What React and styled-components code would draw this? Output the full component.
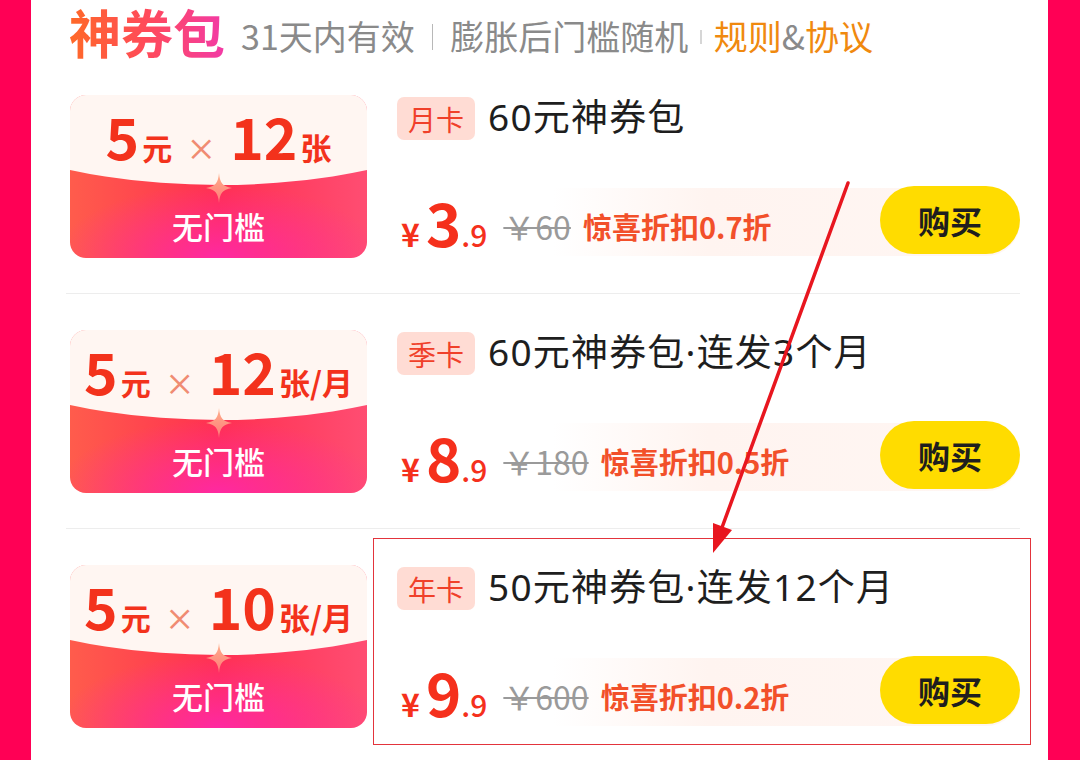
import React from 'react';
import styled, { createGlobalStyle } from 'styled-components';

const GlobalStyle = createGlobalStyle`
  html, body {
    margin: 0;
    padding: 0;
    background: #ff0055;
  }
  body {
    font-family: "Noto Sans CJK SC", "Noto Sans", sans-serif;
  }
`;

const Frame = styled.div`
  position: relative;
  width: 1080px;
  height: 760px;
  overflow: hidden;
  background: #ff0055;
  padding: 0 32px 0 31px;
  box-sizing: border-box;
`;

const Sheet = styled.div`
  height: 100%;
  background: #fff;
  padding: 0 28px 0 35px;
  box-sizing: border-box;
`;

const Header = styled.div`
  display: flex;
  align-items: center;
  height: 59px;
  padding-left: 1px;
`;

const Title = styled.span`
  font-size: 52px;
  font-weight: 700;
  line-height: 56px;
  margin-top: 4px;
  padding: 0 2px;
  background: linear-gradient(90deg, #ff6a26 0%, #ff4a5a 50%, #f23aa8 100%);
  -webkit-background-clip: text;
  background-clip: text;
  color: transparent;
  margin-right: 14px;
`;

const Note = styled.span`
  font-size: 34px;
  line-height: 42px;
  margin-top: 12px;
  color: ${(p) => (p.$link ? '#f0890f' : '#8a8a8a')};
`;

const Sep = styled.span`
  display: inline-block;
  width: 1.5px;
  height: ${(p) => (p.$short ? '14px' : '26px')};
  margin: 14px ${(p) => (p.$short ? '12px' : '17px')} 0;
  background: ${(p) => (p.$short ? '#d6d6d6' : '#b8b8b8')};
`;

const Row = styled.div`
  display: flex;
  padding: 36px 0 35px 4px;
  border-bottom: ${(p) => (p.$last ? 'none' : '1.5px solid #ededed')};
`;

const Coupon = styled.div`
  position: relative;
  flex: none;
  width: 297px;
  height: 163px;
  border-radius: 16px;
  overflow: hidden;
  background:
    radial-gradient(ellipse 55% 45% at 50% 100%, rgba(255, 40, 170, 0.9), rgba(255, 40, 170, 0) 100%),
    linear-gradient(180deg, rgba(255, 150, 160, 0.7) 0%, rgba(255, 140, 150, 0) 40%),
    linear-gradient(90deg, #ff5c4c 0%, #ff3050 50%, #ff4d72 100%);

  &::before {
    content: '';
    position: absolute;
    left: -50%;
    top: -134px;
    width: 200%;
    height: 224px;
    border-radius: 50%;
    background: #fff6f2;
  }
`;

const Amount = styled.div`
  position: relative;
  display: flex;
  align-items: baseline;
  justify-content: center;
  height: 86px;
  margin-top: -3px;
  color: #f3321c;
  font-weight: 700;
  line-height: 86px;
`;

const Big = styled.span`
  font-size: 57px;
`;

const Unit = styled.span`
  font-size: ${(p) => p.$size || 31}px;
  margin-left: 3px;
`;

const Times = styled.span`
  font-size: 30px;
  font-weight: 500;
  color: #f08c72;
  margin: 0 14px;
`;

const Spark = styled.svg`
  position: absolute;
  left: 50%;
  top: 78px;
  margin-left: -13px;
`;

const Free = styled.div`
  position: relative;
  text-align: center;
  margin-top: 28px;
  font-size: 31px;
  line-height: 40px;
  color: #fff;
  font-weight: 500;
`;

const Info = styled.div`
  position: relative;
  flex: 1;
  display: flex;
  flex-direction: column;
  justify-content: space-between;
  margin-left: 30px;
  height: 163px;

  ${(p) => p.$marked && `
    &::after {
      content: '';
      position: absolute;
      left: -24px;
      top: -27px;
      right: -11px;
      bottom: -17px;
      border: 1.5px solid #e3343c;
      pointer-events: none;
    }
  `}
`;

const NameLine = styled.div`
  display: flex;
  align-items: center;
  margin-top: 2px;
`;

const Tag = styled.span`
  display: inline-flex;
  align-items: center;
  justify-content: center;
  height: 43px;
  padding: 0 11px;
  border-radius: 7px;
  background: #ffdcd4;
  color: #f0402a;
  font-size: 28px;
  line-height: 1;
`;

const Name = styled.span`
  margin-left: 13px;
  margin-top: -4px;
  font-family: "Noto Sans", "Noto Sans CJK SC", sans-serif;
  font-size: 37px;
  letter-spacing: 1.2px;
  color: #1e1e1e;
  line-height: 44px;
`;

const PriceLine = styled.div`
  display: flex;
  align-items: center;
  height: 68px;
  margin-bottom: 2px;
  border-radius: 0 34px 34px 0;
  background: linear-gradient(90deg, rgba(255, 242, 238, 0) 25%, #fff4f0 50%, #fff6f3 100%);
`;

const Price = styled.span`
  display: flex;
  align-items: baseline;
  color: #f5301c;
  font-weight: 700;
  margin-left: 4px;
  margin-top: 2px;
`;

const Yen = styled.span`
  font-size: 32px;
  margin-right: 6px;
`;

const Whole = styled.span`
  font-size: 60px;
  line-height: 60px;
`;

const Cents = styled.span`
  font-size: 30px;
  font-weight: 500;
`;

const Orig = styled.span`
  margin-left: 16px;
  margin-top: 8px;
  font-size: 32px;
  color: #9a9a9a;
  text-decoration: line-through;
  text-decoration-thickness: 2px;
`;

const Deal = styled.span`
  margin-left: 12px;
  margin-top: 8px;
  font-size: 29px;
  font-weight: 700;
  color: #f2502a;
`;

const Buy = styled.button`
  margin-left: auto;
  margin-top: -4px;
  width: 140px;
  height: 68px;
  border: none;
  border-radius: 34px;
  background: #ffdc00;
  color: #1e1e1e;
  font-family: inherit;
  font-size: 32px;
  font-weight: 700;
  cursor: pointer;
`;

const Arrow = styled.svg`
  position: absolute;
  left: 0;
  top: 0;
  pointer-events: none;
`;

const packs = [
  { count: '12', unit: '张', tag: '月卡', name: '60元神券包', whole: '3', orig: '￥60', deal: '惊喜折扣0.7折' },
  { count: '12', unit: '张/月', tag: '季卡', name: '60元神券包·连发3个月', whole: '8', orig: '￥180', deal: '惊喜折扣0.5折' },
  { count: '10', unit: '张/月', tag: '年卡', name: '50元神券包·连发12个月', whole: '9', orig: '￥600', deal: '惊喜折扣0.2折', marked: true },
];

function Sparkle() {
  return (
    <Spark width="26" height="30" viewBox="0 0 26 30">
      <defs>
        <linearGradient id="spk" x1="0" y1="0" x2="0" y2="1">
          <stop offset="0" stopColor="#ffb08a" />
          <stop offset="1" stopColor="#ff7a7a" />
        </linearGradient>
      </defs>
      <path d="M13 0 C14 10 16 13 26 15 C16 17 14 20 13 30 C12 20 10 17 0 15 C10 13 12 10 13 0 Z" fill="url(#spk)" />
    </Spark>
  );
}

export default function App() {
  return (
    <Frame>
      <GlobalStyle />
      <Sheet>
        <Header>
          <Title>神券包</Title>
          <Note>31天内有效</Note>
          <Sep />
          <Note>膨胀后门槛随机</Note>
          <Sep $short />
          <Note $link>规则</Note>
          <Note>&amp;</Note>
          <Note $link>协议</Note>
        </Header>
        {packs.map((p, i) => (
          <Row key={p.tag} $last={i === packs.length - 1}>
            <Coupon>
              <Amount>
                <Big>5</Big>
                <Unit $size={30}>元</Unit>
                <Times>×</Times>
                <Big>{p.count}</Big>
                <Unit>{p.unit}</Unit>
              </Amount>
              <Sparkle />
              <Free>无门槛</Free>
            </Coupon>
            <Info $marked={p.marked}>
              <NameLine>
                <Tag>{p.tag}</Tag>
                <Name>{p.name}</Name>
              </NameLine>
              <PriceLine>
                <Price>
                  <Yen>¥</Yen>
                  <Whole>{p.whole}</Whole>
                  <Cents>.9</Cents>
                </Price>
                <Orig>{p.orig}</Orig>
                <Deal>{p.deal}</Deal>
                <Buy>购买</Buy>
              </PriceLine>
            </Info>
          </Row>
        ))}
      </Sheet>
      <Arrow width="1080" height="760" viewBox="0 0 1080 760">
        <line x1="848" y1="183" x2="720" y2="533" stroke="#e8161f" strokeWidth="3.5" strokeLinecap="round" />
        <polygon points="713,553 732,530 713,523" fill="#e8161f" />
      </Arrow>
    </Frame>
  );
}
